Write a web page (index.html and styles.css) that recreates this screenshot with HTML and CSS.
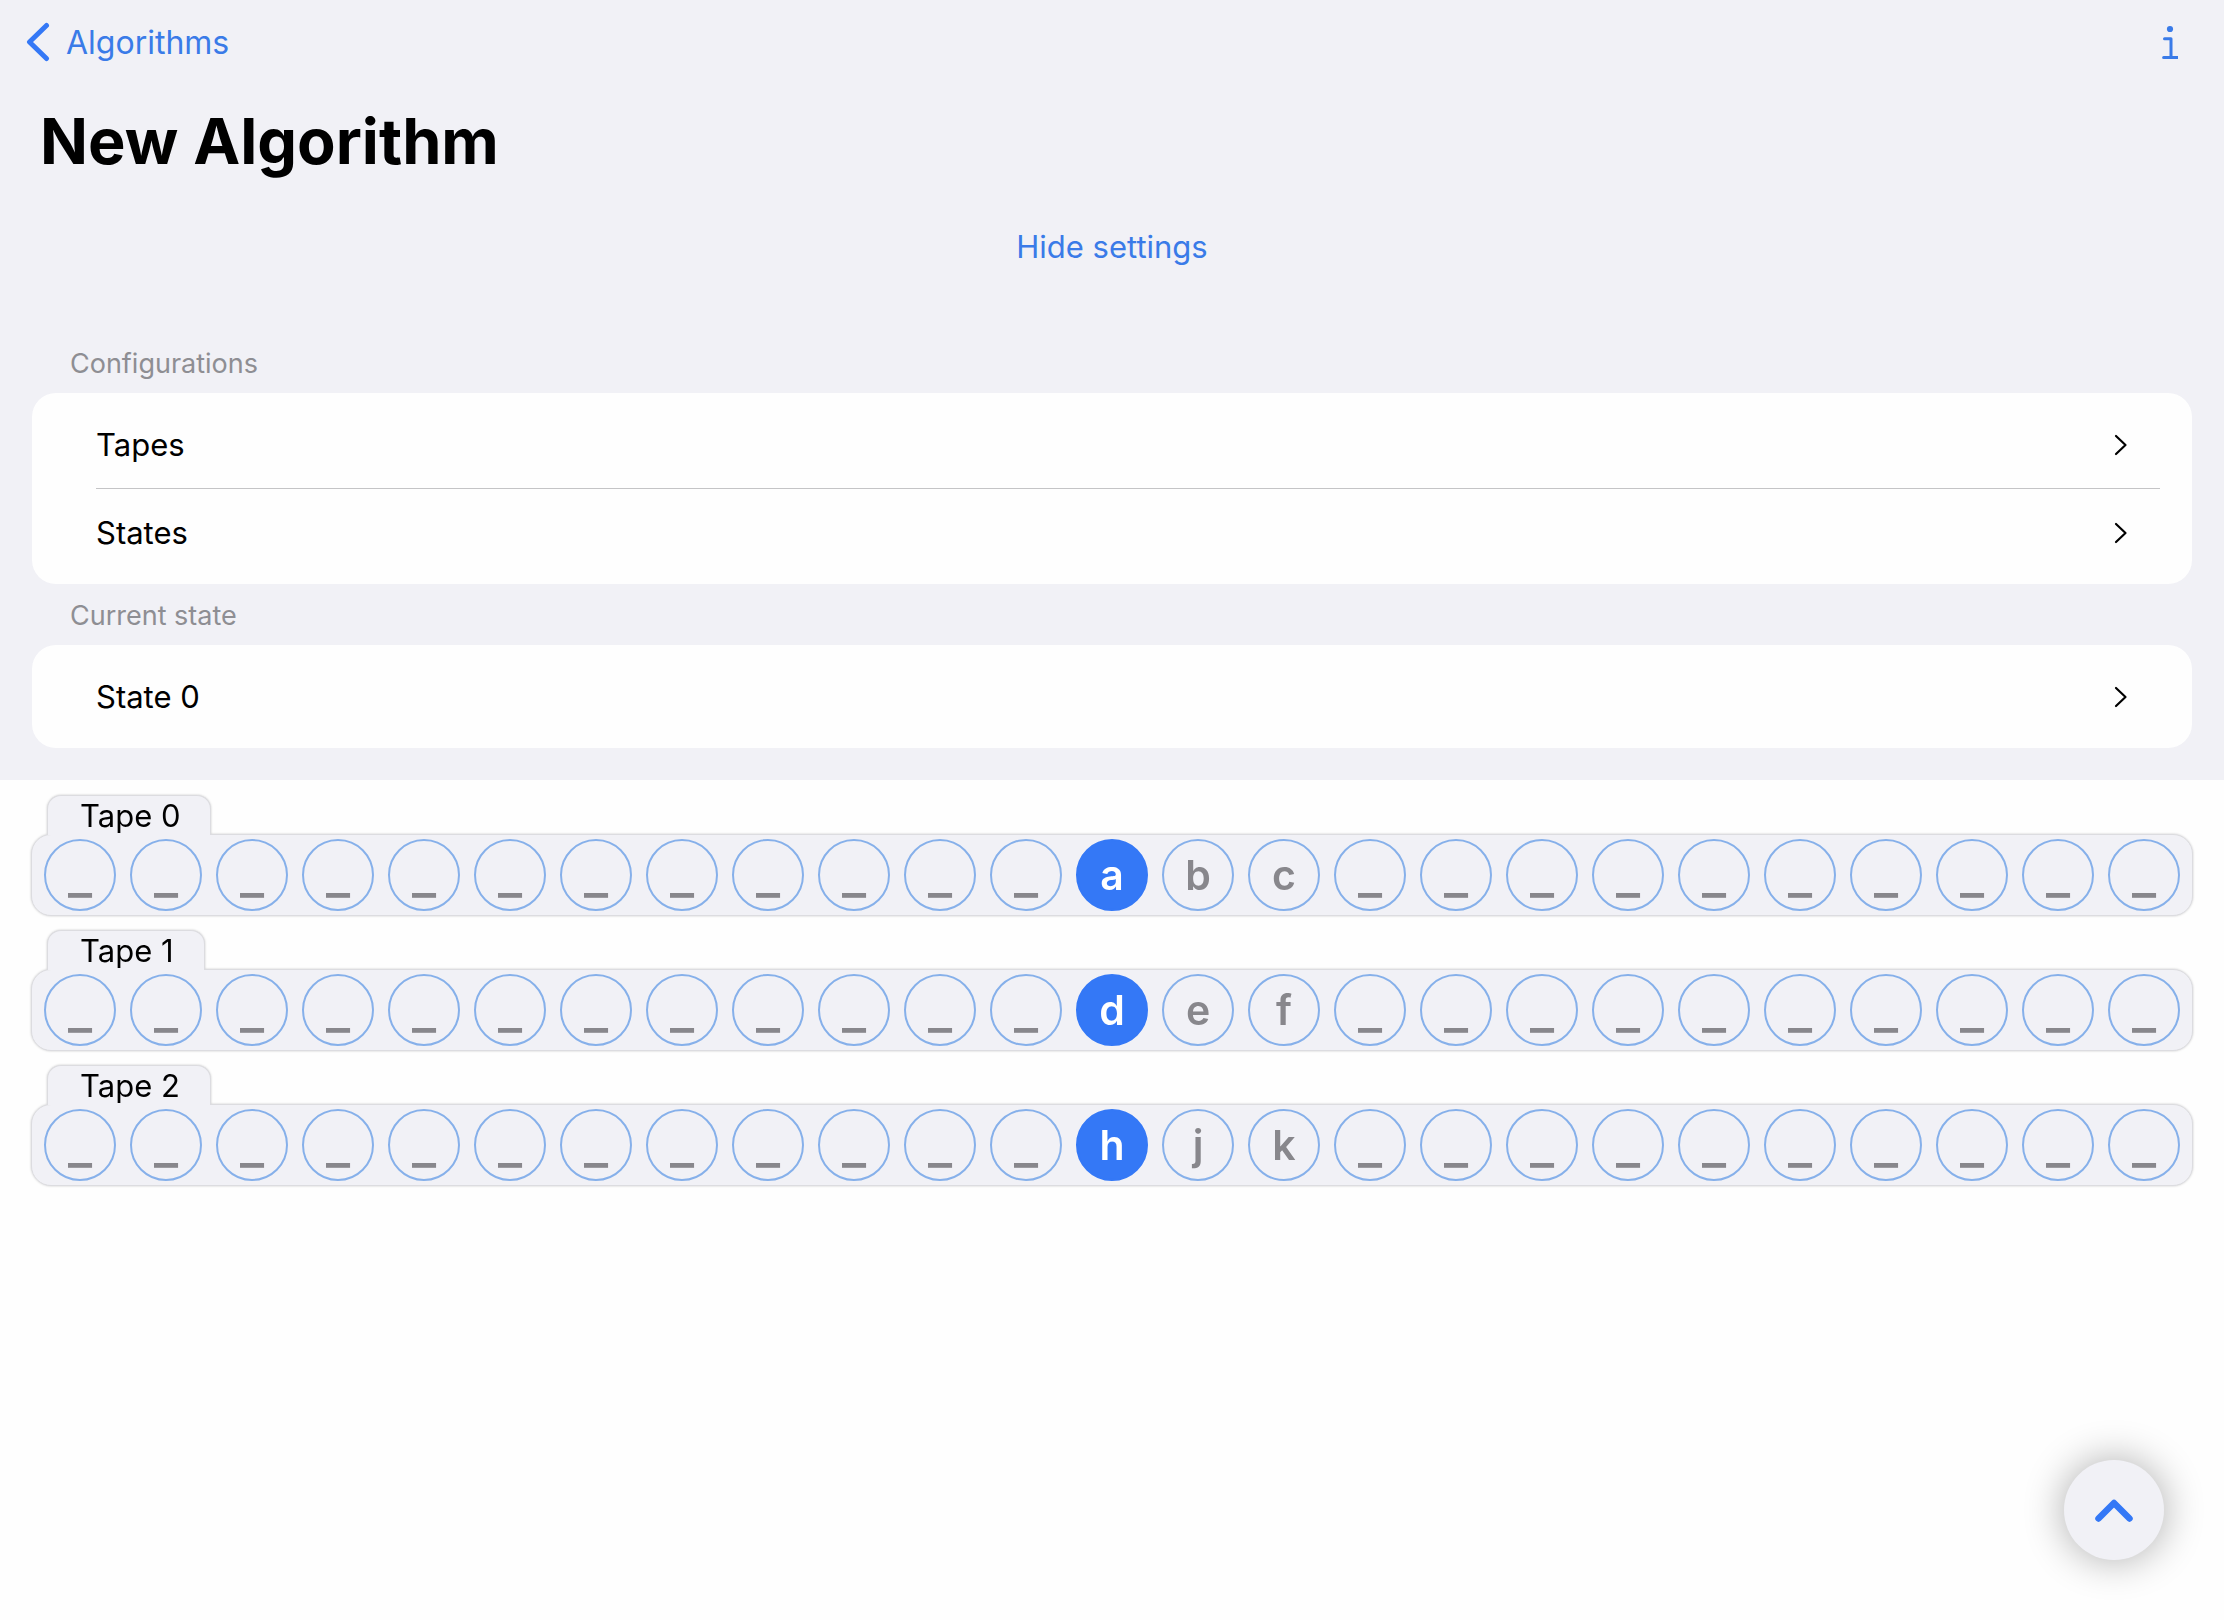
FILE: index.html
```html
<!DOCTYPE html>
<html lang="en">
<head>
<meta charset="utf-8">
<meta name="viewport" content="width=device-width, initial-scale=1">
<title>New Algorithm</title>
<link rel="stylesheet" href="styles.css">
</head>
<body>
<header class="top">
  <nav class="nav">
    <a class="back" href="#algorithms">
      <svg class="back-icon" viewBox="0 0 24 40" aria-hidden="true"><path d="M20.500 3.500 3.500 20l17 16.500"/></svg>
      Algorithms
    </a>
    <button class="info" type="button" aria-label="Information">
      <svg class="info-icon" viewBox="0 0 16 36" aria-hidden="true"><circle cx="8" cy="5" r="3.100"/><path d="M2.500 14.800H9V33.500M1.600 33.500H15.400"/></svg>
    </button>
  </nav>
  <h1 class="title">New Algorithm</h1>
  <button class="toggle" type="button">Hide settings</button>
  <section class="group">
    <h2 class="group-label">Configurations</h2>
    <div class="card">
      <button class="row" type="button">Tapes<svg class="chevron" viewBox="0 0 14 24" aria-hidden="true"><path d="M2 3l9.500 9L2 21"/></svg></button>
      <button class="row" type="button">States<svg class="chevron" viewBox="0 0 14 24" aria-hidden="true"><path d="M2 3l9.500 9L2 21"/></svg></button>
    </div>
  </section>
  <section class="group">
    <h2 class="group-label">Current state</h2>
    <div class="card">
      <button class="row" type="button">State 0<svg class="chevron" viewBox="0 0 14 24" aria-hidden="true"><path d="M2 3l9.500 9L2 21"/></svg></button>
    </div>
  </section>
</header>
<main class="tapes">
  <section class="tape">
    <h3 class="tab">Tape 0</h3>
    <div class="cells">
      <button class="cell blank">_</button><button class="cell blank">_</button><button class="cell blank">_</button><button class="cell blank">_</button><button class="cell blank">_</button><button class="cell blank">_</button>
      <button class="cell blank">_</button><button class="cell blank">_</button><button class="cell blank">_</button><button class="cell blank">_</button><button class="cell blank">_</button><button class="cell blank">_</button>
      <button class="cell head">a</button><button class="cell">b</button><button class="cell">c</button>
      <button class="cell blank">_</button><button class="cell blank">_</button><button class="cell blank">_</button><button class="cell blank">_</button><button class="cell blank">_</button>
      <button class="cell blank">_</button><button class="cell blank">_</button><button class="cell blank">_</button><button class="cell blank">_</button><button class="cell blank">_</button>
    </div>
  </section>
  <section class="tape">
    <h3 class="tab">Tape 1</h3>
    <div class="cells">
      <button class="cell blank">_</button><button class="cell blank">_</button><button class="cell blank">_</button><button class="cell blank">_</button><button class="cell blank">_</button><button class="cell blank">_</button>
      <button class="cell blank">_</button><button class="cell blank">_</button><button class="cell blank">_</button><button class="cell blank">_</button><button class="cell blank">_</button><button class="cell blank">_</button>
      <button class="cell head">d</button><button class="cell">e</button><button class="cell">f</button>
      <button class="cell blank">_</button><button class="cell blank">_</button><button class="cell blank">_</button><button class="cell blank">_</button><button class="cell blank">_</button>
      <button class="cell blank">_</button><button class="cell blank">_</button><button class="cell blank">_</button><button class="cell blank">_</button><button class="cell blank">_</button>
    </div>
  </section>
  <section class="tape">
    <h3 class="tab">Tape 2</h3>
    <div class="cells">
      <button class="cell blank">_</button><button class="cell blank">_</button><button class="cell blank">_</button><button class="cell blank">_</button><button class="cell blank">_</button><button class="cell blank">_</button>
      <button class="cell blank">_</button><button class="cell blank">_</button><button class="cell blank">_</button><button class="cell blank">_</button><button class="cell blank">_</button><button class="cell blank">_</button>
      <button class="cell head">h</button><button class="cell">j</button><button class="cell">k</button>
      <button class="cell blank">_</button><button class="cell blank">_</button><button class="cell blank">_</button><button class="cell blank">_</button><button class="cell blank">_</button>
      <button class="cell blank">_</button><button class="cell blank">_</button><button class="cell blank">_</button><button class="cell blank">_</button><button class="cell blank">_</button>
    </div>
  </section>
</main>
<button class="fab" type="button" aria-label="Show controls">
  <svg class="fab-icon" viewBox="0 0 40 26" aria-hidden="true"><path d="M4.500 21.500 20 6l15.500 15.500"/></svg>
</button>
</body>
</html>
```

FILE: styles.css
```css
:root {
  --blue: #3478f6;
  --link: #3a7be8;
  --panel: #f1f1f6;
  --grey: #8e8e93;
}

* {
  box-sizing: border-box;
}

body {
  margin: 0;
  min-height: 100vh;
  background: #fefefe;
  color: #000;
  font-family: Inter, "Liberation Sans", sans-serif;
  font-size: 31px;
}

button {
  margin: 0;
  padding: 0;
  border: 0;
  background: none;
  color: inherit;
  font: inherit;
  cursor: pointer;
}

svg {
  display: block;
  fill: none;
  stroke: currentColor;
  stroke-linecap: round;
  stroke-linejoin: round;
}

/* Settings panel */
.top {
  display: flex;
  flex-direction: column;
  padding: 0 32px 32px;
  background: var(--panel);
}

.nav {
  display: flex;
  align-items: center;
  justify-content: space-between;
  height: 84px;
  padding: 0 14px 0 0;
  color: var(--link);
}

.back {
  display: flex;
  align-items: center;
  gap: 16px;
  margin-left: -6px;
  color: inherit;
  font-size: 32px;
  text-decoration: none;
}

.back-icon {
  width: 24px;
  height: 40px;
  stroke: var(--blue);
  stroke-width: 5;
}

.info {
  padding: 0 0 0 16px;
}

.info-icon {
  width: 16px;
  height: 36px;
  stroke-width: 3;
}

.info-icon circle {
  fill: currentColor;
  stroke: none;
}

.title {
  margin: 17px 0 0;
  padding-left: 8px;
  font-size: 63px;
  font-weight: 700;
  line-height: 80px;
}

.toggle {
  align-self: center;
  margin: 42px 0 76px;
  color: var(--link);
  line-height: 48px;
}

.group + .group {
  margin-top: 15px;
}

.group-label {
  margin: 0 0 12px;
  padding-left: 38px;
  color: var(--grey);
  font-size: 27px;
  font-weight: 400;
  line-height: 34px;
}

.card {
  padding: 8px 32px 8px 64px;
  border-radius: 24px;
  background: #fefefe;
}

.row {
  display: flex;
  align-items: center;
  justify-content: space-between;
  width: 100%;
  height: 87px;
  padding-right: 32px;
  text-align: left;
}

.row + .row {
  height: 88px;
  border-top: 1px solid #c4c4c6;
}

.chevron {
  width: 14px;
  height: 24px;
  stroke: #000;
  stroke-width: 2.200;
}

/* Tapes */
.tapes {
  display: flex;
  flex-direction: column;
  gap: 14px;
  padding: 15px 31px;
}

.tape {
  display: flex;
  flex-direction: column;
  align-items: flex-start;
  filter: drop-shadow(0 0 1px rgba(0, 0, 0, 0.2));
}

.tab {
  z-index: 1;
  margin: 0 0 -1px 16px;
  padding: 0 30px 0 32px;
  border: 1px solid #dcdce0;
  border-bottom: 0;
  border-radius: 14px 14px 0 0;
  background: var(--panel);
  font-size: 31px;
  font-weight: 400;
  line-height: 39px;
}

.cells {
  display: flex;
  justify-content: center;
  gap: 14px;
  width: 100%;
  padding: 4px 0;
  border: 1px solid #dcdce0;
  border-radius: 20px;
  background: var(--panel);
  overflow: hidden;
}

.cell {
  flex: none;
  width: 72px;
  height: 72px;
  border: 2px solid #86b0ea;
  border-radius: 50%;
  color: #88878c;
  font-size: 41px;
  font-weight: 600;
  line-height: 68px;
}

.blank {
  font-size: 52px;
  font-weight: 500;
}

.head {
  border-color: var(--blue);
  background: var(--blue);
  color: #fff;
}

/* Floating button */
.fab {
  position: fixed;
  right: 60px;
  bottom: 60px;
  display: grid;
  place-items: center;
  width: 100px;
  height: 100px;
  border-radius: 50%;
  background: var(--panel);
  box-shadow: 0 0 40px rgba(0, 0, 0, 0.33);
  color: var(--blue);
}

.fab-icon {
  width: 40px;
  height: 26px;
  stroke-width: 6.500;
}
```
